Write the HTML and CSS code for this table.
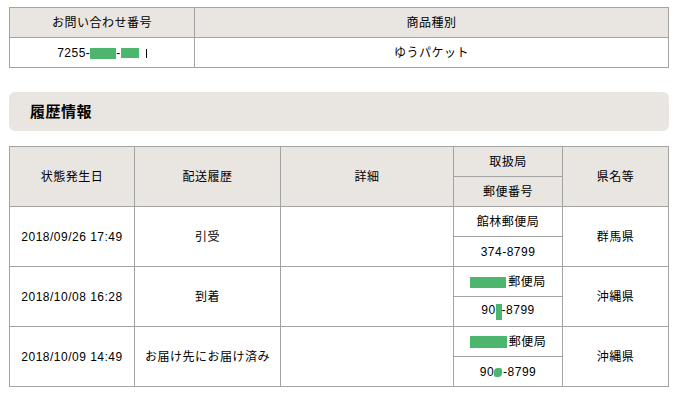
FILE: index.html
```html
<!DOCTYPE html>
<html lang="ja">
<head>
<meta charset="utf-8">
<title>履歴情報</title>
<link rel="stylesheet" href="styles.css">
</head>
<body>
<div class="page">
  <table class="grid info">
    <colgroup><col class="w-num"><col></colgroup>
    <tr><th>お問い合わせ番号</th><th>商品種別</th></tr>
    <tr><td>7255-<span class="mask m-a"></span>-<span class="mask m-b"></span><span class="tail"></span></td><td>ゆうパケット</td></tr>
  </table>

  <h2 class="section">履歴情報</h2>

  <table class="grid history">
    <colgroup>
      <col class="w-date"><col class="w-status"><col class="w-detail"><col class="w-office"><col>
    </colgroup>
    <tr><th rowspan="2">状態発生日</th><th rowspan="2">配送履歴</th><th rowspan="2">詳細</th><th>取扱局</th><th rowspan="2">県名等</th></tr>
    <tr><th>郵便番号</th></tr>

    <tr><td rowspan="2">2018/09/26 17:49</td><td rowspan="2">引受</td><td rowspan="2"></td><td>館林郵便局</td><td rowspan="2">群馬県</td></tr>
    <tr><td>374-8799</td></tr>

    <tr><td rowspan="2">2018/10/08 16:28</td><td rowspan="2">到着</td><td rowspan="2"></td><td><span class="mask m-c"></span>郵便局</td><td rowspan="2">沖縄県</td></tr>
    <tr><td>90<span class="mask m-d"></span>-8799</td></tr>

    <tr><td rowspan="2">2018/10/09 14:49</td><td rowspan="2">お届け先にお届け済み</td><td rowspan="2"></td><td><span class="mask m-e"></span>郵便局</td><td rowspan="2">沖縄県</td></tr>
    <tr><td>90<span class="mask m-f"></span>-8799</td></tr>
  </table>
</div>
</body>
</html>
```

FILE: styles.css
```css
html, body {
  margin: 0;
  padding: 0;
  background: #ffffff;
}

body {
  font-family: "Liberation Sans", "Noto Sans CJK JP", sans-serif;
  font-size: 12px;
  letter-spacing: 0.5px;
  color: #000000;
}

.page {
  width: 660px;
  padding: 7px 0 0 9px;
}

.grid {
  width: 660px;
  border-collapse: collapse;
  table-layout: fixed;
}

.grid th,
.grid td {
  border: 1px solid #a3a3a3;
  height: 29px;
  padding: 0;
  text-align: center;
  vertical-align: middle;
  font-weight: normal;
  line-height: 14px;
  white-space: nowrap;
}

.grid th {
  background: #e9e5e1;
}

.w-num { width: 185px; }

.w-date { width: 125px; }
.w-status { width: 146px; }
.w-detail { width: 173px; }
.w-office { width: 109px; }

.section {
  margin: 24px 0 0 0;
  height: 39px;
  padding: 0 0 0 21px;
  background: #e9e5e1;
  border-radius: 6px;
  font-size: 15px;
  font-weight: bold;
  line-height: 39px;
  color: #000000;
  letter-spacing: 0.5px;
}

.history {
  margin-top: 15px;
}

.mask {
  display: inline-block;
  background: #4cb66f;
  vertical-align: middle;
}

.m-a { width: 26px; height: 11px; }
.m-b { width: 18px; height: 10px; }
.tail {
  display: inline-block;
  width: 1px;
  height: 9px;
  margin-left: 7px;
  background: #000000;
  vertical-align: middle;
}
.m-c { width: 36px; height: 11px; margin-right: 2px; }
.m-d { width: 6px; height: 16px; vertical-align: -6px; }
.m-e { width: 37px; height: 12px; margin-right: 2px; }
.m-f { width: 8px; height: 9px; border-radius: 4px 2px 4px 2px; margin-right: 1px; }
```
